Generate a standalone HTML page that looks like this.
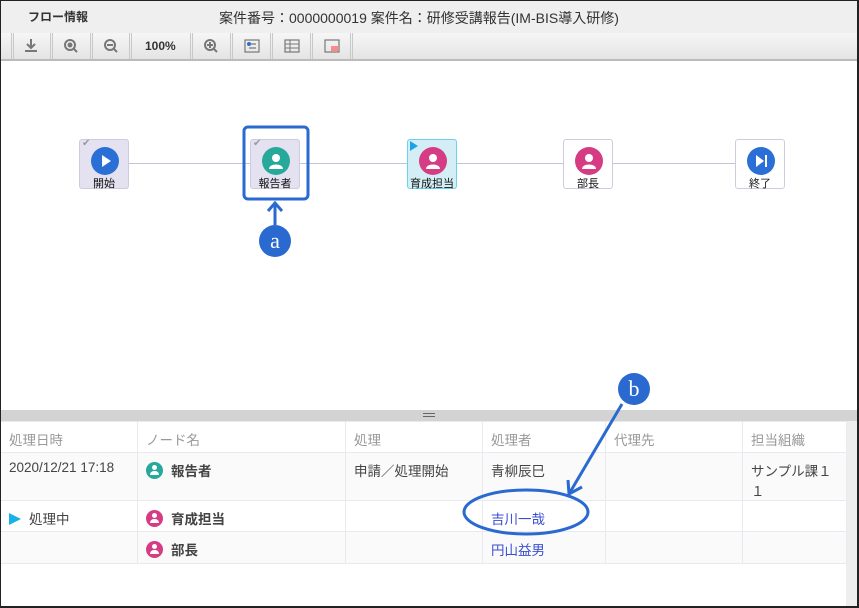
<!DOCTYPE html><html><head><meta charset="utf-8"><style>
*{box-sizing:border-box;margin:0;padding:0}
body{width:859px;height:608px;overflow:hidden;background:#fff;font-family:"Liberation Sans","Noto Sans CJK JP",sans-serif;position:relative}
.frame{position:absolute;left:0;top:0;width:859px;height:608px;border:1px solid #222;border-right:2px solid #222;border-bottom:2px solid #222;pointer-events:none;z-index:9}
.hdr{position:absolute;left:0;top:0;width:859px;height:33px;background:#efefef;font-size:14px;color:#333}
.tb{position:absolute;left:0;top:33px;width:859px;height:28px;background:linear-gradient(#f6f6f6,#e4e4e4);border-bottom:2px solid #bbb}
.sep{position:absolute;top:0;width:3px;height:26px;border-left:1px solid #c8c8c8;border-right:1px solid #c8c8c8}
.node{position:absolute;width:50px;height:50px;border:1px solid #ccd;border-radius:3px;background:#fff;font-size:11px;text-align:center;color:#111}
.node .c{position:absolute;left:11px;top:7px;width:28px;height:28px;border-radius:50%}
.node span{position:absolute;left:0;right:0;top:35px}
.line{position:absolute;height:1px;background:#c4c4d8;top:163px}
.split{position:absolute;left:0;top:410px;width:859px;height:11px;background:#d3d3d3}
table{position:absolute;left:0;top:421px;border-collapse:collapse;font-size:13.5px;color:#444}
td{border:1px solid #e8eaf0;vertical-align:top;padding:7px 8px 0 8px}
tr.h td{color:#999;height:31px;background:#fff}
.bl{color:#3a4fd0}
.ic{display:inline-block;width:17px;height:17px;border-radius:50%;vertical-align:-3px;margin-right:8px;position:relative}
.ic::before{content:"";position:absolute;left:6px;top:3px;width:5px;height:5px;border-radius:50%;background:#fff}
.ic::after{content:"";position:absolute;left:4px;top:9px;width:9px;height:4px;border-radius:4px 4px 0 0;background:#fff}
</style></head><body>
<div class="hdr"><span style="position:absolute;left:28px;top:8px;font-weight:bold;font-size:12px">フロー情報</span><span style="position:absolute;left:219px;top:8px">案件番号：0000000019 案件名：研修受講報告(IM-BIS導入研修)</span></div>
<div class="tb">
<div class="sep" style="left:11px"></div><div class="sep" style="left:50px"></div><div class="sep" style="left:90px"></div><div class="sep" style="left:129px"></div><div class="sep" style="left:190px"></div><div class="sep" style="left:230px"></div><div class="sep" style="left:270px"></div><div class="sep" style="left:310px"></div><div class="sep" style="left:350px"></div>
<svg style="position:absolute;left:0;top:0" width="360" height="28" fill="none" stroke="#777" stroke-width="2">
<path d="M31 6v9M27 11l4 4 4-4M25 18h12" /><circle cx="70" cy="12" r="5"/><path d="M74 16l3 3"/><circle cx="70" cy="12" r="1.5" fill="#777"/>
<circle cx="110" cy="12" r="5"/><path d="M107 12h6M114 16l3 3"/>
<circle cx="210" cy="12" r="5"/><path d="M207 12h6M210 9v6M214 16l3 3"/>
<rect x="245" y="7" width="14" height="12" stroke-width="1.2"/><circle cx="249" cy="11" r="2" fill="#2a6fd6" stroke="none"/><path d="M251 11h5M249 15h7" stroke-width="1.2"/>
<rect x="285" y="7" width="14" height="12" stroke-width="1.2"/><path d="M285 11h14M285 15h14M290 7v12" stroke-width="1"/>
<rect x="325" y="7" width="14" height="12" stroke-width="1.2"/><rect x="331" y="13" width="7" height="5" fill="#f88" stroke="none"/></svg>
<span style="position:absolute;left:145px;top:6px;font-size:12px;font-weight:bold;color:#333">100%</span></div>

<div class="line" style="left:129px;width:121px"></div><div class="line" style="left:300px;width:107px"></div><div class="line" style="left:457px;width:106px"></div><div class="line" style="left:613px;width:122px"></div>
<div class="node" style="left:79px;top:139px;background:#e4e2f0"><div class="c" style="background:#2a6fd6"></div><svg style="position:absolute;left:20px;top:15px" width="12" height="12"><path d="M2 0l9 6-9 6z" fill="#fff"/></svg><span style="color:#111">開始</span><i style="position:absolute;left:2px;top:-2px;color:#999;font-style:normal;font-size:10px">✔</i></div>
<div class="node" style="left:250px;top:139px;background:#e4e2f0"><div class="c" style="background:#26a99a"></div><svg style="position:absolute;left:17px;top:12px" width="16" height="18"><circle cx="8" cy="6" r="4" fill="#fff"/><path d="M1 17c0-6 14-6 14 0z" fill="#fff"/></svg><span>報告者</span><i style="position:absolute;left:2px;top:-2px;color:#999;font-style:normal;font-size:10px">✔</i></div>
<div class="node" style="left:407px;top:139px;background:#d4eef6;border-color:#6cd0ee"><div class="c" style="background:#d63c83"></div><svg style="position:absolute;left:17px;top:12px" width="16" height="18"><circle cx="8" cy="6" r="4" fill="#fff"/><path d="M1 17c0-6 14-6 14 0z" fill="#fff"/></svg><span>育成担当</span><svg style="position:absolute;left:2px;top:1px" width="8" height="10"><path d="M0 0l8 5-8 5z" fill="#1aa3e8"/></svg></div>
<div class="node" style="left:563px;top:139px"><div class="c" style="background:#d63c83"></div><svg style="position:absolute;left:17px;top:12px" width="16" height="18"><circle cx="8" cy="6" r="4" fill="#fff"/><path d="M1 17c0-6 14-6 14 0z" fill="#fff"/></svg><span>部長</span></div>
<div class="node" style="left:735px;top:139px"><div class="c" style="background:#2a6fd6"></div><svg style="position:absolute;left:19px;top:15px" width="13" height="12"><path d="M1 0l8 6-8 6z" fill="#fff"/><rect x="10" y="0" width="2" height="12" fill="#fff"/></svg><span>終了</span></div>

<svg style="position:absolute;left:0;top:0;z-index:5" width="859" height="608">
<rect x="244" y="127" width="64" height="72" rx="4" fill="none" stroke="#2a6ad0" stroke-width="3"/>
<path d="M275 225V203M268 211l7-8 7 8" fill="none" stroke="#2a6ad0" stroke-width="3"/>
<circle cx="275" cy="241" r="16" fill="#2a6ad0"/><text x="275" y="248" fill="#fff" font-size="22" text-anchor="middle" font-family="Liberation Serif">a</text>
<circle cx="634" cy="389" r="16" fill="#2a6ad0"/><text x="634" y="396" fill="#fff" font-size="22" text-anchor="middle" font-family="Liberation Serif">b</text>
<path d="M622 404L569 494M568 480l1 14 13-7" fill="none" stroke="#2a6ad0" stroke-width="3"/>
<ellipse cx="526" cy="512" rx="62" ry="22" fill="none" stroke="#2a6ad0" stroke-width="3"/>
</svg>

<div class="split"><div style="position:absolute;left:423px;top:3px;width:12px;height:4px;border-top:1px solid #666;border-bottom:1px solid #666"></div></div>
<div style="position:absolute;left:846px;top:421px;width:13px;height:187px;background:#eee"></div>
<table>
<tr class="h"><td style="width:137px">処理日時</td><td style="width:208px">ノード名</td><td style="width:137px">処理</td><td style="width:123px">処理者</td><td style="width:137px">代理先</td><td style="width:104px">担当組織</td></tr>
<tr style="height:47px;background:#fafafa"><td>2020/12/21 17:18</td><td style="font-weight:bold"><i class="ic" style="background:#26a99a"></i>報告者</td><td>申請／処理開始</td><td>青柳辰巳</td><td></td><td>サンプル課１１</td></tr>
<tr style="height:31px"><td><svg width="12" height="12" style="vertical-align:-1px;margin-right:8px"><path d="M0 0l12 6-12 6z" fill="#1ab0e8"/></svg>処理中</td><td style="font-weight:bold"><i class="ic" style="background:#d63c83"></i>育成担当</td><td></td><td class="bl">吉川一哉</td><td></td><td></td></tr>
<tr style="height:32px;background:#fafafa"><td></td><td style="font-weight:bold"><i class="ic" style="background:#d63c83"></i>部長</td><td></td><td class="bl">円山益男</td><td></td><td></td></tr>
</table>
<div class="frame"></div>
</body></html>
